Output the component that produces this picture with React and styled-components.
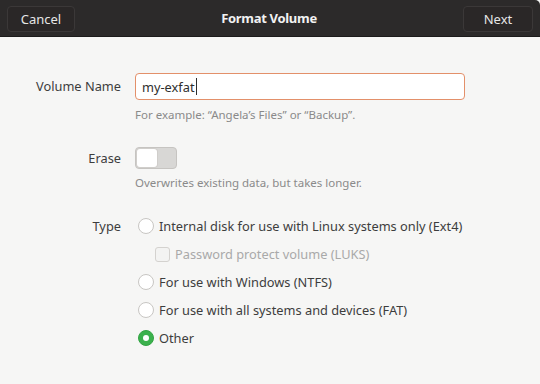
import styled, { createGlobalStyle } from "styled-components";

const GlobalStyle = createGlobalStyle`
  html, body {
    margin: 0;
    padding: 0;
    background: #f6f6f5;
  }
  body {
    font-family: "Noto Sans", "DejaVu Sans", sans-serif;
    font-size: 12.8px;
    color: #3d3d3d;
  }
`;

const typeOptions = [
  { label: "Internal disk for use with Linux systems only (Ext4)" },
  { label: "Password protect volume (LUKS)", checkbox: true },
  { label: "For use with Windows (NTFS)" },
  { label: "For use with all systems and devices (FAT)" },
  { label: "Other", checked: true },
];

const App = () => (
  <>
    <GlobalStyle />
    <Window>
      <HeaderBar>
        <HeaderButton>Cancel</HeaderButton>
        <Title>Format Volume</Title>
        <HeaderButton $wide>Next</HeaderButton>
      </HeaderBar>

      <Form>
        <Field>
          <Label $height={27}>Volume Name</Label>
          <div>
            <Input>
              my-exfat<Caret />
            </Input>
            <Hint>For example: “Angela’s Files” or “Backup”.</Hint>
          </div>
        </Field>

        <Field $top={24}>
          <Label $height={22}>Erase</Label>
          <div>
            <Switch>
              <Knob />
            </Switch>
            <Hint $top={5}>Overwrites existing data, but takes longer.</Hint>
          </div>
        </Field>

        <Field $top={21}>
          <Label $height={28}>Type</Label>
          <Options>
            {typeOptions.map((opt) => (
              <Option key={opt.label} $indent={opt.checkbox}>
                {opt.checkbox ? <Checkbox /> : <Radio $checked={opt.checked} />}
                <OptionText $disabled={opt.checkbox}>{opt.label}</OptionText>
              </Option>
            ))}
          </Options>
        </Field>
      </Form>
    </Window>
  </>
);

export default App;

const Window = styled.div`
  width: 540px;
  height: 384px;
  background: #f6f6f5;
  overflow: hidden;
`;

const HeaderBar = styled.div`
  height: 37px;
  background: #2c2a2a;
  border-top-right-radius: 5px;
  display: flex;
  align-items: center;
  justify-content: space-between;
  padding: 0 7px;
  box-sizing: border-box;
  border-bottom: 1px solid #1c1b1b;
`;

const HeaderButton = styled.div`
  width: ${(p) => (p.$wide ? 70 : 68)}px;
  height: 26px;
  box-sizing: border-box;
  border: 1px solid #3b3838;
  border-radius: 4px;
  background: #2a2727;
  color: #e6e6e6;
  display: flex;
  align-items: center;
  justify-content: center;
  font-size: 13px;
  margin-top: 1px;
`;

const Title = styled.div`
  color: #f2f2f2;
  font-weight: bold;
  font-size: 13px;
  letter-spacing: -0.3px;
`;

const Form = styled.div`
  padding-top: 36px;
`;

const Field = styled.div`
  display: grid;
  grid-template-columns: 121px 1fr;
  column-gap: 14px;
  align-items: start;
  margin-top: ${(p) => p.$top || 0}px;
`;

const Label = styled.div`
  text-align: right;
  line-height: ${(p) => p.$height}px;
  color: #3d3d3d;
`;

const Input = styled.div`
  width: 330px;
  height: 27px;
  box-sizing: border-box;
  border: 1px solid #e3906a;
  border-radius: 4px;
  background: #ffffff;
  padding: 0 6px;
  display: flex;
  align-items: center;
  color: #2e2e2e;
`;

const Caret = styled.span`
  display: inline-block;
  width: 1px;
  height: 17px;
  background: #2e2e2e;
  margin-left: 1px;
`;

const Hint = styled.div`
  margin-top: ${(p) => p.$top ?? 6}px;
  line-height: 17px;
  font-size: 11.5px;
  color: #8a8a8a;
`;

const Switch = styled.div`
  width: 42px;
  height: 22px;
  box-sizing: border-box;
  border: 1px solid #c6c4c1;
  border-radius: 4px;
  background: #d8d7d5;
  display: flex;
  align-items: center;
  padding: 1px;
`;

const Knob = styled.div`
  width: 20px;
  height: 18px;
  border-radius: 3px;
  background: #ffffff;
  box-shadow: 0 0 0 1px #d0cecb;
`;

const Options = styled.div`
  display: flex;
  flex-direction: column;
`;

const Option = styled.div`
  height: 28px;
  display: flex;
  align-items: center;
  gap: 5px;
  padding-left: ${(p) => (p.$indent ? 20 : 3)}px;
`;

const Radio = styled.div`
  width: 16px;
  height: 16px;
  box-sizing: border-box;
  border-radius: 50%;
  flex-shrink: 0;
  position: relative;
  border: 1px solid ${(p) => (p.$checked ? "#33a444" : "#c8c6c3")};
  background: ${(p) => (p.$checked ? "#3bb14d" : "#ffffff")};

  &::after {
    content: "";
    display: ${(p) => (p.$checked ? "block" : "none")};
    position: absolute;
    left: 50%;
    top: 50%;
    width: 6px;
    height: 6px;
    margin: -3px 0 0 -3px;
    border-radius: 50%;
    background: #ffffff;
  }
`;

const Checkbox = styled.div`
  width: 15px;
  height: 15px;
  box-sizing: border-box;
  border: 1px solid #d4d2cf;
  border-radius: 3px;
  background: #f3f3f2;
  flex-shrink: 0;
`;

const OptionText = styled.span`
  color: ${(p) => (p.$disabled ? "#a9a9a9" : "#3d3d3d")};
  white-space: nowrap;
`;
